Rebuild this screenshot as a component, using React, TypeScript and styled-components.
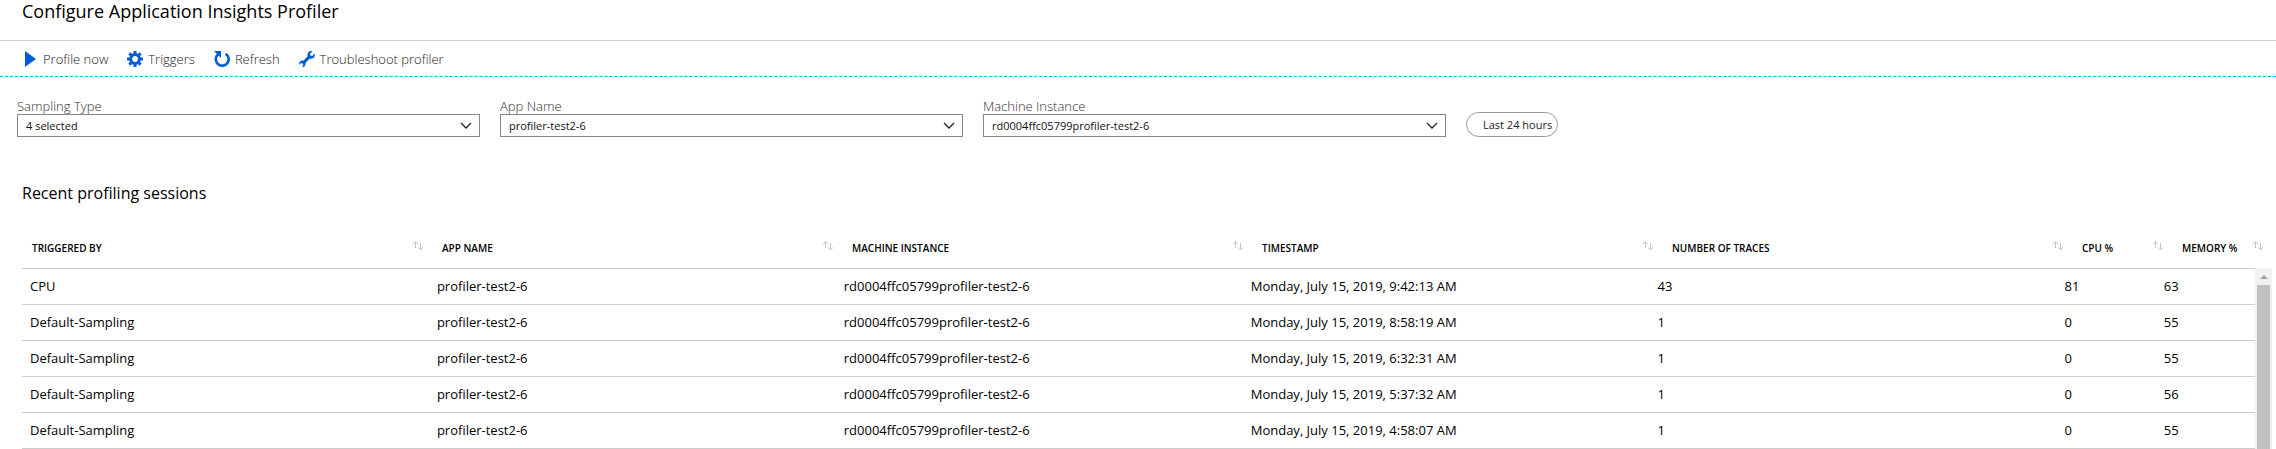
import React from 'react';
import styled, { createGlobalStyle } from 'styled-components';

const GlobalStyle = createGlobalStyle`
  * { box-sizing: border-box; }
  body {
    margin: 0;
    background: #fff;
    color: #000;
    font-family: "Open Sans", "Noto Sans", sans-serif;
    font-size: 13px;
    overflow: hidden;
  }
`;

const Header = styled.header`
  height: 41px;
  padding: 0 22px;
  border-bottom: 1px solid #ccc;
`;

const Title = styled.h1`
  margin: 0;
  font-size: 18px;
  line-height: 22px;
  font-weight: 500;
`;

const Toolbar = styled.nav`
  display: flex;
  align-items: center;
  gap: 19px;
  height: 36px;
  padding: 1px 21px 0;
  border-bottom: 1px dashed #00b7e8;
`;

const Command = styled.button`
  display: flex;
  align-items: center;
  gap: 5px;
  padding: 0;
  border: 0;
  background: none;
  color: #222;
  font: 300 13px/16px "Open Sans", "Noto Sans", sans-serif;
  cursor: pointer;

  svg {
    color: #015cda;
  }
`;

const Filters = styled.section`
  display: flex;
  align-items: flex-end;
  gap: 20px;
  padding: 21px 17px 0;
`;

const Field = styled.div`
  flex: 0 1 463px;
  min-width: 0;
`;

const FieldLabel = styled.label`
  display: block;
  color: #333;
  font-size: 13px;
  line-height: 16px;
  font-weight: 300;
`;

const SelectBox = styled.div`
  display: grid;
  align-items: center;

  > * {
    grid-area: 1 / 1;
  }

  svg {
    justify-self: end;
    margin-right: 8px;
    pointer-events: none;
  }
`;

const Select = styled.select`
  appearance: none;
  width: 100%;
  height: 23px;
  padding: 0 28px 0 8px;
  border: 1px solid #888;
  border-radius: 0;
  background: #fff;
  color: #111;
  font: 400 11px/16px "Open Sans", "Noto Sans", sans-serif;
`;

const Pill = styled.button`
  height: 25px;
  padding: 0 5px 0 16px;
  border: 1px solid #999;
  border-radius: 13px;
  background: #fff;
  color: #222;
  white-space: nowrap;
  font: 400 11px/16px "Open Sans", "Noto Sans", sans-serif;
`;

const Sessions = styled.section`
  padding: 44px 4px 0 22px;
`;

const SectionTitle = styled.h2`
  margin: 0;
  font-size: 16px;
  line-height: 24px;
  font-weight: 400;
`;

const TableArea = styled.div`
  display: grid;
  padding-top: 23px;

  > * {
    grid-area: 1 / 1;
  }
`;

const Table = styled.table`
  display: block;

  thead, tbody {
    display: block;
  }

  tbody {
    margin-right: 17px;
  }
`;

const Row = styled.tr`
  display: grid;
  grid-template-columns: repeat(5, 41fr) repeat(2, 10fr);
  height: 36px;
  border-bottom: 1px solid #ccc;
`;

const HeadRow = styled(Row)`
  height: 41px;
`;

const HeadCell = styled.th`
  display: flex;
  justify-content: space-between;
  padding: 13px 8px 0 10px;
  font-size: 10px;
  line-height: 14px;
  font-weight: 600;
  text-align: left;
  white-space: nowrap;
`;

const Cell = styled.td`
  padding: 8px 0 8px 8px;
  font-size: 13px;
  line-height: 18px;
  white-space: nowrap;
`;

const ScrollRail = styled.div`
  justify-self: end;
  display: flex;
  flex-direction: column;
  align-items: center;
  width: 17px;
  margin-top: 40px;
  background: #f1f1f1;
`;

const ScrollUp = styled.div`
  margin: 7px 0 6px;
  border: 4px solid transparent;
  border-top-width: 0;
  border-bottom-color: #a3a3a3;
`;

const ScrollThumb = styled.div`
  flex: 1;
  width: 13px;
  background: #c1c1c1;
`;

const PlayIcon = () => (
  <svg width="17" height="16" viewBox="0 0 17 16" aria-hidden="true">
    <path d="M4 0 15 8 4 16Z" fill="currentColor" />
  </svg>
);

const GearIcon = () => (
  <svg width="16" height="16" viewBox="0 0 16 16" aria-hidden="true" stroke="currentColor" fill="none">
    <circle cx="8" cy="8" r="4.4" strokeWidth="3" />
    {[0, 45, 90, 135].map((a) => (
      <path key={a} d="M8 0V3M8 13V16" strokeWidth="3" transform={`rotate(${a} 8 8)`} />
    ))}
  </svg>
);

const RefreshIcon = () => (
  <svg width="16" height="16" viewBox="0 0 16 16" aria-hidden="true">
    <path d="M11.6 2.8A6.4 6.4 0 1 1 3 4.6L5 2.6" fill="none" stroke="currentColor" strokeWidth="2.6" />
    <path d="M0 0H7V7Z" fill="currentColor" />
  </svg>
);

const WrenchIcon = () => (
  <svg width="16" height="16" viewBox="0 0 16 16" aria-hidden="true">
    <path
      d="M13.4.3 11 2.7l.4 1.9 1.9.4 2.4-2.4c.6 2-.2 3.9-1.8 4.7-1 .5-2 .5-3 .1L6.6 11.7c.3 1.7-.5 3.5-2.3 4.2l-1.2.1 1.3-2.2-1-1.6H1.7L.1 13.8c-.3-1.6.3-3.1 1.7-3.9.8-.4 1.7-.5 2.5-.2L8.7 5.2c-.5-1.4-.2-3 .9-4.1C10.6.1 12.1-.2 13.4.3Z"
      fill="currentColor"
    />
  </svg>
);

const ChevronIcon = () => (
  <svg width="12" height="7" viewBox="0 0 12 7" aria-hidden="true">
    <path d="M1 1 6 6 11 1" fill="none" stroke="#222" strokeWidth="1.3" />
  </svg>
);

const SortIcon = () => (
  <svg width="12" height="10" viewBox="0 0 12 10" aria-hidden="true">
    <path d="M3.5 7V1M1 3 3.5 .7 6 3M8.5 2V8M6 6.5 8.5 8.8 11 6.5" fill="none" stroke="#c4c4c4" />
  </svg>
);

const commands = [
  { label: 'Profile now', Icon: PlayIcon },
  { label: 'Triggers', Icon: GearIcon },
  { label: 'Refresh', Icon: RefreshIcon },
  { label: 'Troubleshoot profiler', Icon: WrenchIcon },
];

const filters = [
  { id: 'sampling-type', label: 'Sampling Type', value: '4 selected' },
  { id: 'app-name', label: 'App Name', value: 'profiler-test2-6' },
  { id: 'machine-instance', label: 'Machine Instance', value: 'rd0004ffc05799profiler-test2-6' },
];

const columns = ['TRIGGERED BY', 'APP NAME', 'MACHINE INSTANCE', 'TIMESTAMP', 'NUMBER OF TRACES', 'CPU %', 'MEMORY %'];

const app = 'profiler-test2-6';
const machine = 'rd0004ffc05799profiler-test2-6';
const sessions = [
  ['CPU', app, machine, 'Monday, July 15, 2019, 9:42:13 AM', '43', '81', '63'],
  ['Default-Sampling', app, machine, 'Monday, July 15, 2019, 8:58:19 AM', '1', '0', '55'],
  ['Default-Sampling', app, machine, 'Monday, July 15, 2019, 6:32:31 AM', '1', '0', '55'],
  ['Default-Sampling', app, machine, 'Monday, July 15, 2019, 5:37:32 AM', '1', '0', '56'],
  ['Default-Sampling', app, machine, 'Monday, July 15, 2019, 4:58:07 AM', '1', '0', '55'],
];

export default function App() {
  return (
    <>
      <GlobalStyle />
      <Header>
        <Title>Configure Application Insights Profiler</Title>
      </Header>
      <Toolbar>
        {commands.map(({ label, Icon }) => (
          <Command key={label} type="button">
            <Icon />
            {label}
          </Command>
        ))}
      </Toolbar>
      <main>
        <Filters>
          {filters.map(({ id, label, value }) => (
            <Field key={id}>
              <FieldLabel htmlFor={id}>{label}</FieldLabel>
              <SelectBox>
                <Select id={id}>
                  <option>{value}</option>
                </Select>
                <ChevronIcon />
              </SelectBox>
            </Field>
          ))}
          <Pill type="button">Last 24 hours</Pill>
        </Filters>
        <Sessions>
          <SectionTitle>Recent profiling sessions</SectionTitle>
          <TableArea>
            <Table>
              <thead>
                <HeadRow>
                  {columns.map((name) => (
                    <HeadCell key={name} scope="col">
                      {name}
                      <SortIcon />
                    </HeadCell>
                  ))}
                </HeadRow>
              </thead>
              <tbody>
                {sessions.map((cells) => (
                  <Row key={cells[3]}>
                    {cells.map((text, i) => (
                      <Cell key={columns[i]}>{text}</Cell>
                    ))}
                  </Row>
                ))}
              </tbody>
            </Table>
            <ScrollRail>
              <ScrollUp />
              <ScrollThumb />
            </ScrollRail>
          </TableArea>
        </Sessions>
      </main>
    </>
  );
}
